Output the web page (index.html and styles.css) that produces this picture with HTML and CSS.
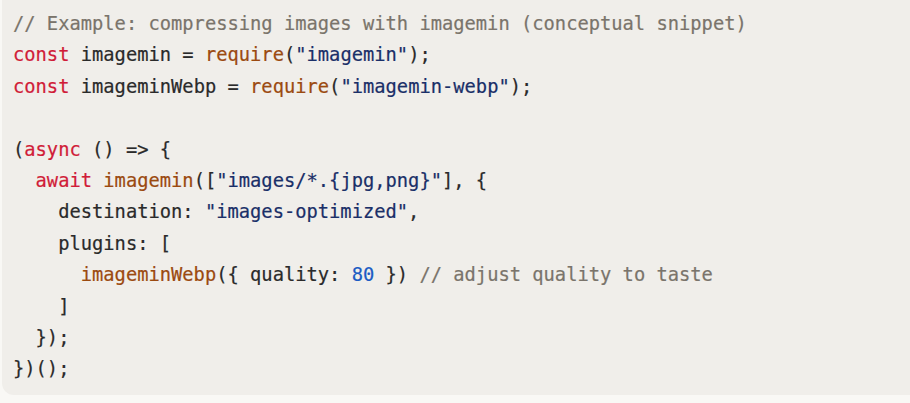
FILE: index.html
```html
<!DOCTYPE html>
<html lang="en">
<head>
<meta charset="utf-8">
<title>Code snippet</title>
<link rel="stylesheet" href="styles.css">
</head>
<body>
<div class="code-block">
<pre class="code"><code><span class="cm">// Example: compressing images with imagemin (conceptual snippet)</span>
<span class="kw">const</span> imagemin = <span class="fn">require</span>(<span class="st">"imagemin"</span>);
<span class="kw">const</span> imageminWebp = <span class="fn">require</span>(<span class="st">"imagemin-webp"</span>);

(<span class="kw">async</span> () =&gt; {
  <span class="kw">await</span> <span class="fn">imagemin</span>([<span class="st">"images/*.{jpg,png}"</span>], {
    destination: <span class="st">"images-optimized"</span>,
    plugins: [
      <span class="fn">imageminWebp</span>({ quality: <span class="nu">80</span> }) <span class="cm">// adjust quality to taste</span>
    ]
  });
})();</code></pre>
</div>
</body>
</html>
```
FILE: styles.css
```css
html, body {
  margin: 0;
  padding: 0;
  background: #f9f8f5;
  overflow: hidden;
}

body {
  padding-left: 2px;
}

.code-block {
  background: #f0eeea;
  border-radius: 12px;
  margin-top: -20px;
  margin-right: -40px;
  padding: 28px 0 10px 11px;
}

.code {
  margin: 0;
  font-family: "DejaVu Sans Mono", "Liberation Mono", monospace;
  font-size: 18.75px;
  line-height: 31.4px;
  color: #2a2a2a;
  white-space: pre;
  -webkit-text-stroke: 0.2px currentColor;
}

.cm { color: #7a746b; }
.kw { color: #d01c38; }
.fn { color: #9b4a10; }
.st { color: #1a2f68; }
.nu { color: #1c5cc4; }
```
